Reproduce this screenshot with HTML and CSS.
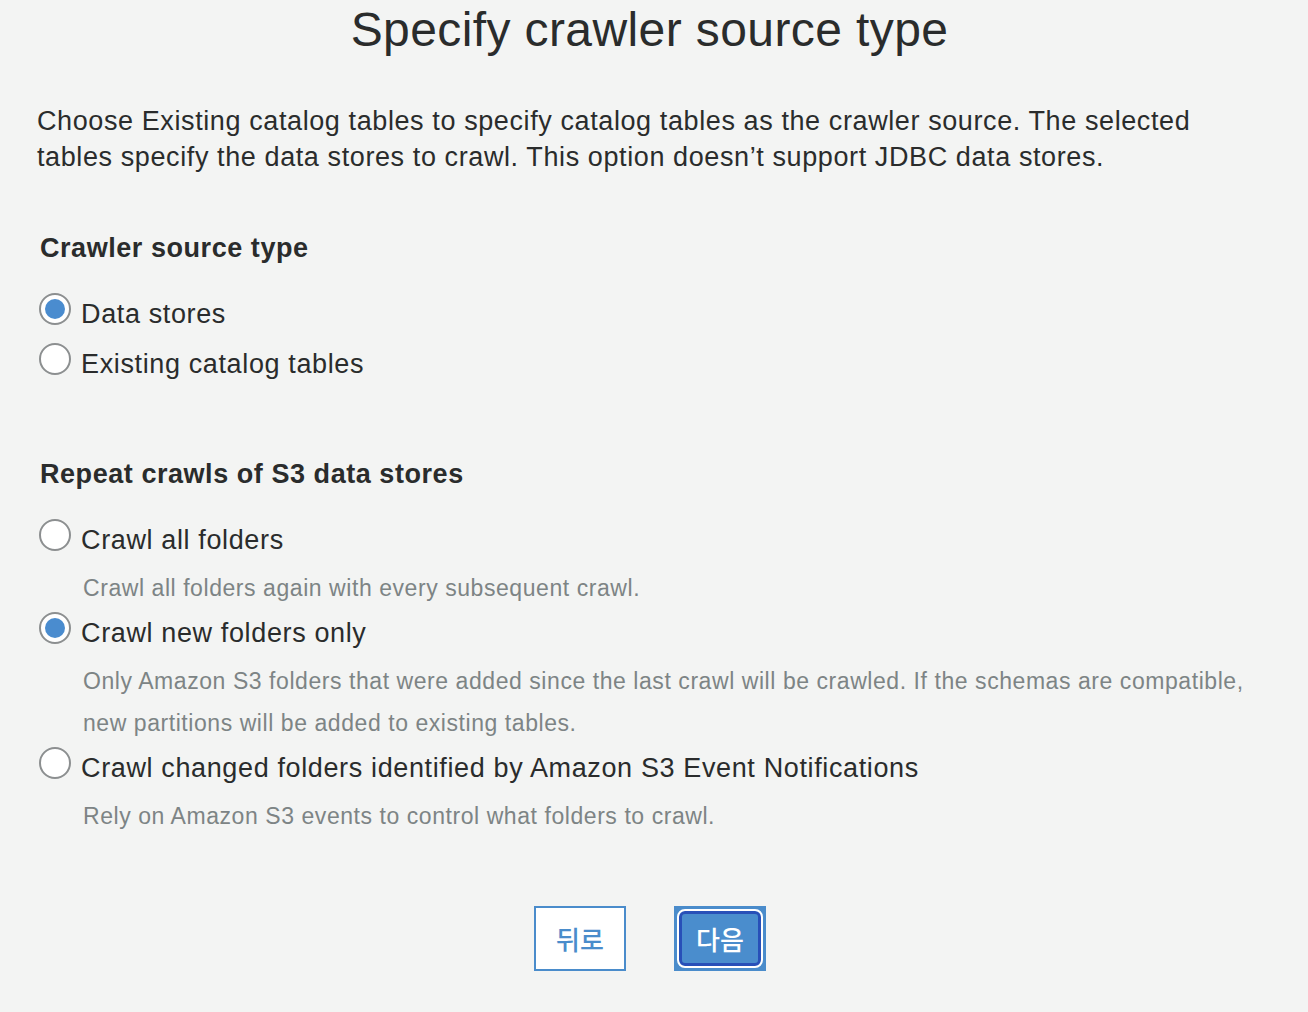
FILE: index.html
```html
<!DOCTYPE html>
<html lang="en">
<head>
<meta charset="utf-8">
<title>Specify crawler source type</title>
<link rel="stylesheet" href="styles.css">
</head>
<body>
<main class="page">
  <h1 class="title">Specify crawler source type</h1>
  <p class="intro">Choose Existing catalog tables to specify catalog tables as the crawler source. The selected tables specify the data stores to crawl. This option doesn’t support JDBC data stores.</p>

  <section class="group group-source">
    <h2 class="group-title">Crawler source type</h2>
    <div class="options">
      <label class="option"><span class="radio checked"></span><span class="label">Data stores</span></label>
      <label class="option"><span class="radio"></span><span class="label">Existing catalog tables</span></label>
    </div>
  </section>

  <section class="group group-repeat">
    <h2 class="group-title">Repeat crawls of S3 data stores</h2>
    <div class="options">
      <div class="option-block">
        <label class="option"><span class="radio"></span><span class="label">Crawl all folders</span></label>
        <p class="desc">Crawl all folders again with every subsequent crawl.</p>
      </div>
      <div class="option-block">
        <label class="option"><span class="radio checked"></span><span class="label">Crawl new folders only</span></label>
        <p class="desc">Only Amazon S3 folders that were added since the last crawl will be crawled. If the schemas are compatible, new partitions will be added to existing tables.</p>
      </div>
      <div class="option-block">
        <label class="option"><span class="radio"></span><span class="label">Crawl changed folders identified by Amazon S3 Event Notifications</span></label>
        <p class="desc">Rely on Amazon S3 events to control what folders to crawl.</p>
      </div>
    </div>
  </section>

  <div class="actions">
    <button class="btn btn-back" type="button">뒤로</button>
    <button class="btn btn-next" type="button"><span class="btn-inner">다음</span></button>
  </div>
</main>
</body>
</html>
```

FILE: styles.css
```css
html, body {
  margin: 0;
  padding: 0;
  background: #f3f4f3;
}

body {
  font-family: "Liberation Sans", Arial, "Noto Sans CJK KR", sans-serif;
  color: #2a2c2c;
}

.page {
  width: 1308px;
  height: 1012px;
  box-sizing: border-box;
  padding: 0 40px 0 37px;
  overflow: hidden;
}

.title {
  margin: 0 6px 0 0;
  padding-top: 2px;
  text-align: center;
  font-size: 48px;
  font-weight: 400;
  letter-spacing: 0.4px;
  line-height: 56px;
  color: #2a2c2c;
}

.intro {
  margin: 45px 0 0;
  max-width: 1190px;
  font-size: 27px;
  letter-spacing: 0.6px;
  line-height: 36px;
}

.group {
  padding-left: 3px;
}

.group-source {
  margin-top: 55px;
}

.group-repeat {
  margin-top: 74px;
}

.group-title {
  margin: 0;
  font-size: 27px;
  font-weight: 700;
  letter-spacing: 0.55px;
  line-height: 36px;
}

.options {
  margin-top: 30px;
  display: flex;
  flex-direction: column;
}

.group-source .options {
  gap: 14px;
}

.option {
  display: flex;
  align-items: center;
  gap: 10px;
  height: 36px;
  margin-left: -1px;
}

.radio {
  box-sizing: border-box;
  width: 32px;
  height: 32px;
  border-radius: 50%;
  border: 2px solid #8c8f90;
  background: #ffffff;
  position: relative;
  top: -5px;
  flex: none;
}

.radio.checked::after {
  content: "";
  position: absolute;
  left: 4px;
  top: 4px;
  width: 20px;
  height: 20px;
  border-radius: 50%;
  background: #4a8ccf;
}

.label {
  font-size: 27px;
  letter-spacing: 0.63px;
  line-height: 36px;
  color: #2a2c2c;
}

.group-repeat .options {
  margin-top: 30px;
}

.desc {
  margin: 9px 0 6px 43px;
  font-size: 23px;
  letter-spacing: 0.56px;
  line-height: 42px;
  color: #7d8485;
}

.actions {
  margin-top: 63px;
  display: flex;
  justify-content: center;
  gap: 48px;
  padding-right: 5px;
}

.btn {
  box-sizing: border-box;
  width: 92px;
  height: 65px;
  font-family: "Noto Sans CJK KR", "Liberation Sans", sans-serif;
  font-size: 26px;
  font-weight: 500;
  cursor: pointer;
  padding: 0;
}

.btn-back {
  background: #ffffff;
  border: 2px solid #4a8ccb;
  color: #4a8ccb;
}

.btn-next {
  background: #4a8ccb;
  border: none;
  padding: 3px;
  color: #ffffff;
}

.btn-inner {
  box-sizing: border-box;
  display: flex;
  align-items: center;
  justify-content: center;
  width: 100%;
  height: 100%;
  border: 2px solid #ffffff;
  border-radius: 8px;
  background: #4a8dcd;
  box-shadow: inset 0 0 0 3px #2850b8;
}
```
